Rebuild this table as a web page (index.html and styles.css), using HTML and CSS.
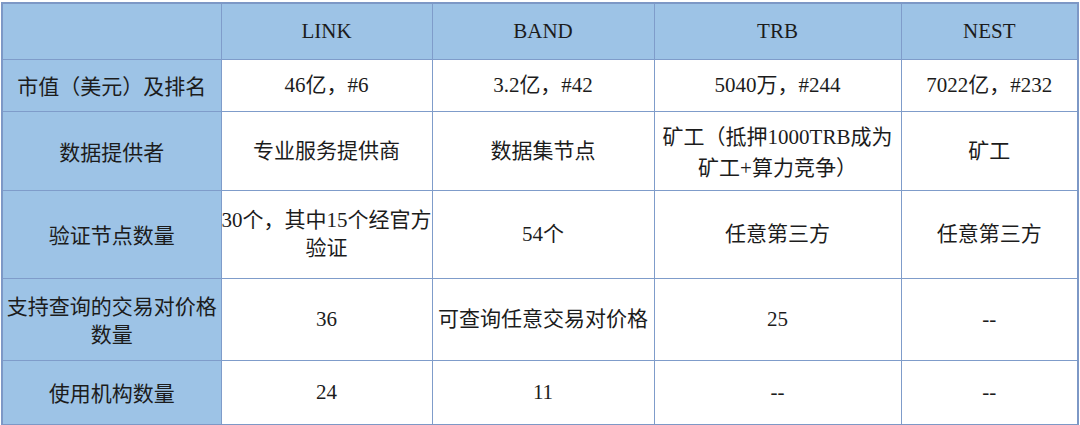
FILE: index.html
```html
<!DOCTYPE html>
<html lang="zh">
<head>
<meta charset="utf-8">
<link rel="stylesheet" href="styles.css">
</head>
<body>
<div class="wrap">
<table class="cmp">
  <colgroup>
    <col class="c1"><col class="c2"><col class="c3"><col class="c4"><col class="c5">
  </colgroup>
  <tr class="r1 head">
    <th class="label"></th><th>LINK</th><th>BAND</th><th>TRB</th><th>NEST</th>
  </tr>
  <tr class="r2">
    <th class="label">市值（美元）及排名</th><td>46亿，#6</td><td>3.2亿，#42</td><td>5040万，#244</td><td>7022亿，#232</td>
  </tr>
  <tr class="r3">
    <th class="label">数据提供者</th><td>专业服务提供商</td><td>数据集节点</td><td class="tall">矿工（抵押1000TRB成为<br>矿工+算力竞争）</td><td>矿工</td>
  </tr>
  <tr class="r4">
    <th class="label">验证节点数量</th><td>30个，其中15个经官方<br>验证</td><td>54个</td><td>任意第三方</td><td>任意第三方</td>
  </tr>
  <tr class="r5">
    <th class="label">支持查询的交易对价格<br>数量</th><td>36</td><td>可查询任意交易对价格</td><td>25</td><td>--</td>
  </tr>
  <tr class="r6">
    <th class="label">使用机构数量</th><td>24</td><td>11</td><td>--</td><td>--</td>
  </tr>
</table>
</div>
</body>
</html>
```

FILE: styles.css
```css
html, body {
  margin: 0;
  padding: 0;
  background: #ffffff;
}
.wrap {
  padding: 2px 0 0 1px;
}
.cmp {
  border-collapse: collapse;
  table-layout: fixed;
  width: 1076px;
  font-family: "Liberation Serif", "Noto Sans CJK SC", serif;
  font-size: 21px;
  color: #1c1c1c;
  border: 2px solid #7d98c6;
}
.c1 { width: 219px; }
.c2 { width: 211px; }
.c3 { width: 222px; }
.c4 { width: 247px; }
.c5 { width: 177px; }
.cmp th, .cmp td {
  border: 1px solid #7f9cca;
  padding: 0;
  text-align: center;
  vertical-align: middle;
  font-weight: normal;
  line-height: 28px;
  white-space: nowrap;
}
.head th {
  background: #9dc3e6;
}
.label {
  background: #9dc3e6;
  font-family: "Noto Sans CJK SC", sans-serif;
}
.cmp td.tall {
  line-height: 31px;
  padding-top: 4px;
}
.r1 { height: 56px; }
.r2 { height: 52px; }
.r3 { height: 79px; }
.r4 { height: 88px; }
.r5 { height: 82px; }
.r6 { height: 65px; }
```
